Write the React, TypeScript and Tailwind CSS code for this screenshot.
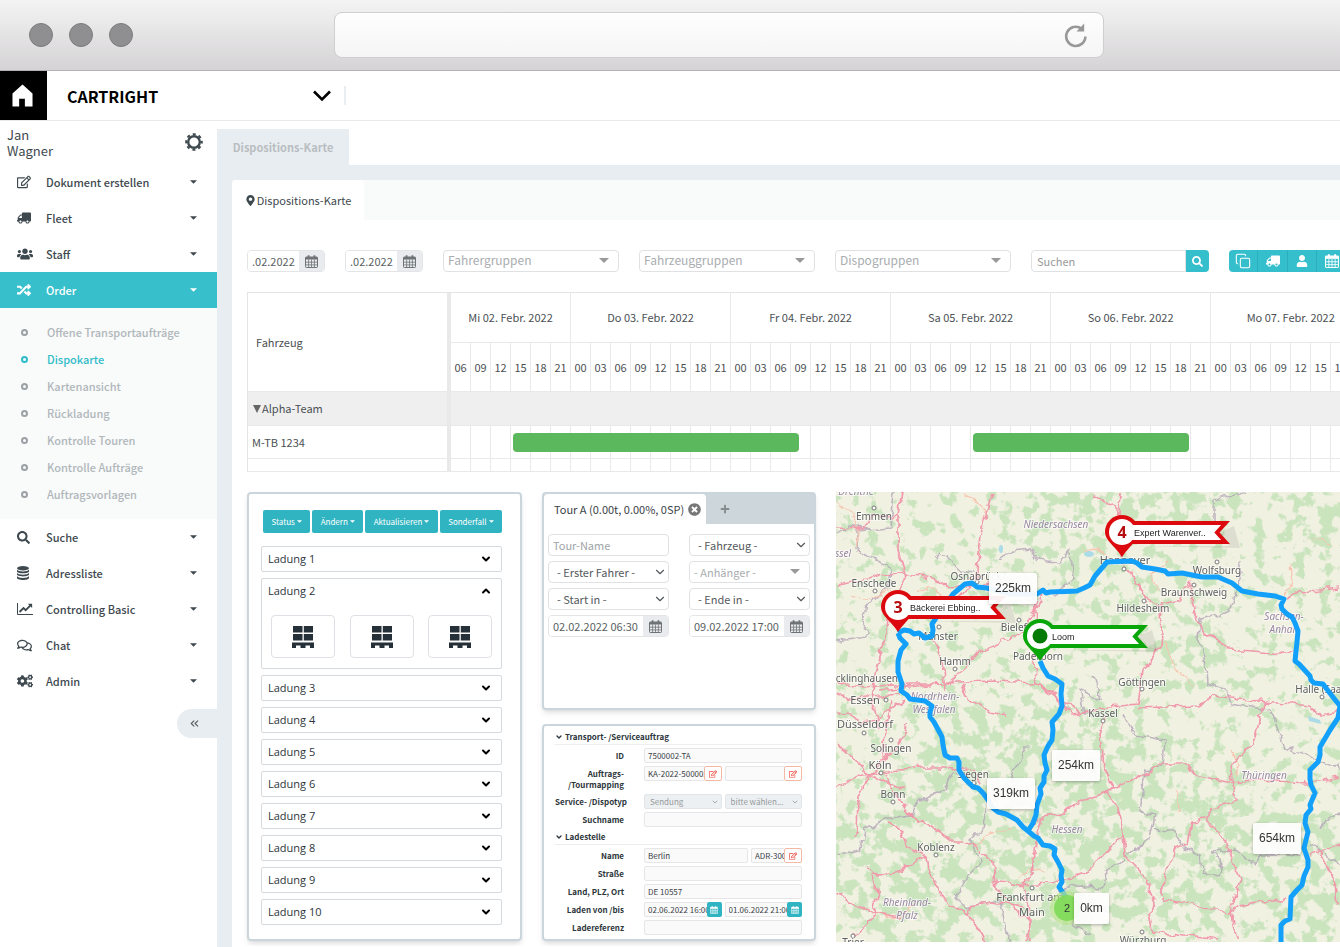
import React, { useState } from 'react';
import {
  FaCogs,
  FaMapMarkerAlt,
  FaPlus,
  FaRandom,
  FaRegComments,
  FaRegEdit,
  FaSearch,
  FaTimesCircle,
  FaTruck,
  FaUser,
  FaUsers,
} from 'react-icons/fa';
import { ChevronDown, ChevronsLeft, ChevronUp, Copy } from 'lucide-react';

const SANS = "font-['Noto_Sans_CJK_SC','Noto_Sans',sans-serif]";

const Caret: React.FC<{ className?: string }> = ({ className }) => (
  <svg viewBox="0 0 8 4" className={className} fill="currentColor" aria-hidden="true">
    <path d="M0 0h8L4 4z" />
  </svg>
);

const CalendarIcon: React.FC<{ className?: string }> = ({ className }) => (
  <svg viewBox="0 0 13 13" className={className} fill="none" stroke="currentColor" aria-hidden="true">
    <rect x="0.5" y="2" width="12" height="10.5" rx="0.8" />
    <path d="M1 2.6h11v1.4H1z" fill="currentColor" />
    <path d="M3.6 4.5v8M6.5 4.5v8M9.4 4.5v8M0.5 7.2h12M0.5 9.9h12" strokeWidth="0.8" />
    <path d="M3.6 0.3v3M9.4 0.3v3" strokeWidth="1.8" />
  </svg>
);

const DatabaseIcon: React.FC<{ className?: string }> = ({ className }) => (
  <svg viewBox="0 0 12 14" className={className} fill="currentColor" aria-hidden="true">
    <ellipse cx="6" cy="2.2" rx="6" ry="2.2" />
    <path d="M0 3.6c1 1.5 3.2 1.9 6 1.9s5-.4 6-1.9v1.8c0 1-2.7 1.9-6 1.9s-6-.9-6-1.9z" />
    <path d="M0 6.8c1 1.5 3.2 1.9 6 1.9s5-.4 6-1.9v1.8c0 1-2.7 1.9-6 1.9s-6-.9-6-1.9z" />
    <path d="M0 10c1 1.5 3.2 1.9 6 1.9s5-.4 6-1.9v1.9c0 1.1-2.7 2-6 2s-6-.9-6-2z" />
  </svg>
);

const LineChartIcon: React.FC<{ className?: string }> = ({ className }) => (
  <svg viewBox="0 0 16 12" className={className} fill="none" stroke="currentColor" aria-hidden="true">
    <path d="M0.5 0v11.5h15.5" />
    <path d="M2.5 9l4-4 2.2 2.2L13.5 2.4" strokeWidth="1.9" />
    <path d="M10.8 0.7h4.3V5z" fill="currentColor" stroke="none" />
  </svg>
);

const GearRing: React.FC = () => (
  <svg viewBox="0 0 18 18" className="size-[18px]" fill="none" stroke="currentColor" aria-hidden="true">
    <circle cx="9" cy="9" r="5.8" strokeWidth="2.4" />
    <circle cx="9" cy="9" r="7.8" strokeWidth="2" strokeDasharray="3.06 3.066" strokeDashoffset="1.5" />
  </svg>
);

const PalletIcon: React.FC = () => (
  <svg viewBox="0 0 22 22" className="size-[22px]" fill="#263038" aria-hidden="true">
    <path d="M1 0h9.5v6.5H1zM11.8 0h9.2v6.5h-9.2zM1 8h9.5v6.5H1zM11.8 8h9.2v6.5h-9.2z" />
    <path d="M0 16.5h22V22h-4v-2.5h-4.5V22h-5v-2.5H4V22H0z" />
  </svg>
);

type MenuItem = { label: string; icon: React.ReactNode; children?: string[] };

const menu: MenuItem[] = [
  { label: 'Dokument erstellen', icon: <FaRegEdit className="size-[14px]" /> },
  { label: 'Fleet', icon: <FaTruck className="size-[14px] -scale-x-100" /> },
  { label: 'Staff', icon: <FaUsers className="size-4" /> },
  {
    label: 'Order',
    icon: <FaRandom className="size-[14px]" />,
    children: [
      'Offene Transportaufträge',
      'Dispokarte',
      'Kartenansicht',
      'Rückladung',
      'Kontrolle Touren',
      'Kontrolle Aufträge',
      'Auftragsvorlagen',
    ],
  },
  { label: 'Suche', icon: <FaSearch className="size-[13px]" /> },
  { label: 'Adressliste', icon: <DatabaseIcon className="h-[14px] w-3" /> },
  { label: 'Controlling Basic', icon: <LineChartIcon className="h-3 w-4" /> },
  { label: 'Chat', icon: <FaRegComments className="size-[15px]" /> },
  { label: 'Admin', icon: <FaCogs className="size-4" /> },
];

const BrowserBar: React.FC = () => (
  <div className="flex h-[71px] items-center border-b border-[#b5b4b5] bg-linear-to-b from-[#f4f4f4] to-[#d5d3d5] pr-[236px] pl-[29px]">
    <div className="mr-[201px] flex shrink-0 gap-4">
      {[0, 1, 2].map((dot) => (
        <span key={dot} className="size-6 rounded-full border border-[#7c7c7e] bg-[#8f8f91]" />
      ))}
    </div>
    <div className="flex h-[46px] flex-1 items-center rounded-lg border border-[#cfcfcf] bg-linear-to-b from-[#fefefe] to-[#f5f5f5] pr-[15px]">
      <input aria-label="Adresse" className="h-full min-w-0 flex-1 bg-transparent px-4 outline-none" />
      <button aria-label="Neu laden" className="text-[#98989a]">
        <svg viewBox="0 0 24 26" className="h-[26px] w-6" fill="none" stroke="currentColor" strokeWidth="2.6" aria-hidden="true">
          <path d="M17.5 6.6A9.6 9.6 0 1 0 21.4 14.5" />
          <path d="M12.5 9.6h7.7V1.4z" fill="currentColor" stroke="none" />
        </svg>
      </button>
    </div>
  </div>
);

const Header: React.FC = () => (
  <header className="flex h-[50px] items-stretch border-b border-[#e6eaec] bg-white">
    <a href="#home" aria-label="Startseite" className="flex w-[47px] items-center bg-black pl-3 text-white">
      <svg viewBox="0 0 22 24" className="h-[23px] w-[21px]" fill="currentColor" aria-hidden="true">
        <path d="M11 0.5L0.5 10v13.5H7.5v-8h6v8h8V10z" />
      </svg>
    </a>
    <button className="my-[15px] flex w-[299px] items-center justify-between border-r-2 border-[#e9eef2] pr-[13px] pl-5 text-base leading-5 font-bold text-black">
      CARTRIGHT
      <svg viewBox="0 0 18 12" className="h-3 w-[18px]" fill="none" stroke="currentColor" strokeWidth="2.6" aria-hidden="true">
        <path d="M1 1.5l8 8 8-8" />
      </svg>
    </button>
  </header>
);

const Sidebar: React.FC = () => (
  <aside className="flex w-[217px] shrink-0 flex-col bg-white text-[#3e494f]">
    <div className="flex h-[43px] items-start justify-between pr-[14px] pl-[7px]">
      <div className="w-20 pt-1.5 text-[13px] leading-4">
        Jan
        <br />
        Wagner
      </div>
      <button aria-label="Einstellungen" className="mt-3">
        <GearRing />
      </button>
    </div>
    <nav>
      {menu.map((item) => (
        <div key={item.label}>
          <button
            className={
              item.children
                ? 'flex h-9 w-full items-center bg-[#37bfcc] pr-5 pl-[17px] text-[11px] font-medium text-white'
                : 'flex h-9 w-full items-center pr-5 pl-[17px] text-[11px] font-medium'
            }
          >
            <span className="flex w-[29px] items-center">{item.icon}</span>
            <span className="flex-1 text-left">{item.label}</span>
            <Caret className="h-1 w-[7px]" />
          </button>
          {item.children && (
            <ul className="bg-[#f9fafa] py-[11px] text-[11px] leading-[27px] font-medium text-[#b0b7ba]">
              {item.children.map((child) => (
                <li key={child}>
                  <a
                    href="#order"
                    className={child === 'Dispokarte' ? 'flex items-center pl-[21px] text-[#2fbccb]' : 'flex items-center pl-[21px]'}
                  >
                    <span
                      className={
                        child === 'Dispokarte'
                          ? 'mr-[19px] size-[7px] rounded-full border-2 border-[#2fbccb]'
                          : 'mr-[19px] size-[7px] rounded-full border-2 border-[#9ba1a4]'
                      }
                    />
                    {child}
                  </a>
                </li>
              ))}
            </ul>
          )}
        </div>
      ))}
    </nav>
    <button
      aria-label="Menü einklappen"
      className="mt-[10px] flex h-[29px] w-10 items-center self-end rounded-l-full bg-[#e8edf1] pl-[11px] text-[#555c60]"
    >
      <ChevronsLeft className="size-[13px]" />
    </button>
  </aside>
);

const DateField: React.FC<{ label: string; value: string; className: string }> = ({ label, value, className }) => (
  <div className={`flex h-[22px] overflow-hidden rounded border border-[#e2e4e6] text-[#5a5f63] ${className}`}>
    <input aria-label={label} defaultValue={value} className="min-w-0 flex-1 bg-white px-1 text-[11px] leading-5 outline-none" />
    <button aria-label={`${label} wählen`} className="flex w-[25px] items-center justify-center bg-[#e9ebee] text-[#6f7376]">
      <CalendarIcon className="size-[13px]" />
    </button>
  </div>
);

const GroupSelect: React.FC<{ label: string }> = ({ label }) => (
  <div className="relative w-[176px] shrink-0">
    <select
      aria-label={label}
      className="block h-[22px] w-full appearance-none rounded border border-[#dfe1e2] bg-white px-1 pb-0.5 text-xs leading-[18px] text-[#a9adb0] outline-none"
    >
      <option>{label}</option>
    </select>
    <Caret className="pointer-events-none absolute top-2 right-[10px] h-[5px] w-[10px] text-[#999]" />
  </div>
);

const FilterBar: React.FC = () => (
  <div className="flex gap-5">
    <DateField label="Von" value=".02.2022" className="w-[78px] shrink-0" />
    <DateField label="Bis" value=".02.2022" className="w-[78px] shrink-0" />
    <GroupSelect label="Fahrergruppen" />
    <GroupSelect label="Fahrzeuggruppen" />
    <GroupSelect label="Dispogruppen" />
    <div className="flex h-[22px] w-[178px] shrink-0">
      <input
        aria-label="Suchen"
        placeholder="Suchen"
        className="min-w-0 flex-1 rounded-l border border-[#dfe1e2] px-[5px] text-[11px] leading-5 outline-none placeholder:text-[#999]"
      />
      <button aria-label="Suche starten" className="flex w-[23px] items-center justify-center rounded-r bg-[#35bfcc] text-white">
        <FaSearch className="size-[11px]" />
      </button>
    </div>
    <div className="flex h-[22px] shrink-0 divide-x divide-[#2cafbc] overflow-hidden rounded bg-[#35bfcc] text-white">
      <button aria-label="Kopieren" className="flex w-[29px] items-center justify-center">
        <Copy className="size-4" strokeWidth={1.6} />
      </button>
      <button aria-label="Fahrzeuge" className="flex w-[30px] items-center justify-center">
        <FaTruck className="size-[14px] -scale-x-100" />
      </button>
      <button aria-label="Fahrer" className="flex w-[29px] items-center justify-center">
        <FaUser className="size-3" />
      </button>
      <button aria-label="Kalender" className="flex w-[29px] items-center justify-center">
        <CalendarIcon className="size-[14px]" />
      </button>
    </div>
  </div>
);

const days = ['Mi 02. Febr. 2022', 'Do 03. Febr. 2022', 'Fr 04. Febr. 2022', 'Sa 05. Febr. 2022', 'So 06. Febr. 2022', 'Mo 07. Febr. 2022'];
const allHours = ['00', '03', '06', '09', '12', '15', '18', '21'];
const slots = days.flatMap((day, i) => (i === 0 ? allHours.slice(2) : allHours).map((hour) => ({ key: day + hour, hour })));

// offsets and lengths in three-hour slots
const tours = [
  { start: 3.1, length: 14.3 },
  { start: 26.1, length: 10.8 },
];

const Timeline: React.FC = () => (
  <div className="overflow-hidden">
    <table className="w-[1123px] table-fixed border-separate border-spacing-0 border-t border-l border-[#e4e4e4] text-[11px] text-[#4b5054]">
      <colgroup>
        <col className="w-[203px]" />
        {slots.map((slot) => (
          <col key={slot.key} className="w-5" />
        ))}
      </colgroup>
      <thead>
        <tr className="h-[50px]">
          <th rowSpan={2} className="border-r-4 border-b border-[#e9e9e9] px-2 text-left font-normal">
            Fahrzeug
          </th>
          {days.map((day, i) => (
            <th
              key={day}
              colSpan={i === 0 ? 6 : 8}
              className="border-r border-b border-[#e9e9e9] p-0 text-center font-normal whitespace-nowrap"
            >
              {day}
            </th>
          ))}
        </tr>
        <tr className="h-[49px]">
          {slots.map((slot) => (
            <th key={slot.key} className="border-r border-b border-[#e9e9e9] p-0 text-center font-normal">
              {slot.hour}
            </th>
          ))}
        </tr>
      </thead>
      <tbody>
        <tr className="h-[34px] bg-[#efefef]">
          <td className="border-r-4 border-b border-[#e9e9e9] px-[5px]">
            <span className="flex items-center gap-px">
              <svg viewBox="0 0 8 8" className="size-2" fill="#666" aria-hidden="true">
                <path d="M0 0h8L4 8z" />
              </svg>
              Alpha-Team
            </span>
          </td>
          <td colSpan={slots.length} className="border-b border-[#e9e9e9]" />
        </tr>
        <tr className="h-[33px]">
          <td className="border-r-4 border-b border-[#e9e9e9] px-1">M-TB 1234</td>
          {slots.map((slot, i) => (
            <td key={slot.key} className={i === 0 ? 'relative border-r border-b border-[#e9e9e9] p-0' : 'border-r border-b border-[#e9e9e9] p-0'}>
              {i === 0 &&
                tours.map((tour) => (
                  <div
                    key={tour.start}
                    className="absolute top-[7px] h-[19px] rounded bg-[#5cb85c]"
                    style={{ left: tour.start * 20, width: tour.length * 20 }}
                  />
                ))}
            </td>
          ))}
        </tr>
        <tr className="h-[13px]">
          <td className="border-r-4 border-b border-[#e9e9e9] p-0" />
          {slots.map((slot) => (
            <td key={slot.key} className="border-r border-b border-[#e9e9e9] p-0" />
          ))}
        </tr>
      </tbody>
    </table>
  </div>
);

const Loads: React.FC = () => {
  const [open, setOpen] = useState(2);

  return (
    <section className="w-[275px] shrink-0 rounded border-2 border-[#cbd6dc] bg-white pt-4 pr-[18px] pb-[14px] pl-3 shadow-md">
      <div className="mb-[13px] flex gap-0.5 pl-0.5">
        {['Status', 'Ändern', 'Aktualisieren', 'Sonderfall'].map((name) => (
          <button
            key={name}
            className="flex h-[23px] flex-auto items-center justify-center gap-0.5 rounded-xs bg-[#30b4c1] text-[8px] text-white"
          >
            {name}
            <Caret className="h-[3px] w-[5px]" />
          </button>
        ))}
      </div>
      <div className="flex flex-col gap-1.5 font-['Open_Sans',sans-serif] text-[11px] text-[#2c363c]">
        {Array.from({ length: 10 }, (_, i) => i + 1).map((n) => (
          <div key={n} className="rounded-xs border border-[#d5dadf]">
            <button
              aria-expanded={open === n}
              onClick={() => setOpen(open === n ? 0 : n)}
              className="flex h-6 w-full items-center justify-between pr-[9px] pl-1.5"
            >
              Ladung {n}
              {open === n ? (
                <ChevronUp className="size-3 text-black" strokeWidth={4} />
              ) : (
                <ChevronDown className="size-3 text-black" strokeWidth={4} />
              )}
            </button>
            {open === n && (
              <div className="flex justify-between px-[9px] pt-3 pb-[10px]">
                {[0, 1, 2].map((pallet) => (
                  <button
                    key={pallet}
                    aria-label={`Palette ${pallet + 1}`}
                    className="flex h-[43px] w-16 items-center justify-center rounded border border-[#dde1e5]"
                  >
                    <PalletIcon />
                  </button>
                ))}
              </div>
            )}
          </div>
        ))}
      </div>
    </section>
  );
};

const TourSelect: React.FC<{ label: string; muted?: boolean }> = ({ label, muted }) => (
  <div className="relative">
    <select
      aria-label={label}
      className={
        muted
          ? 'block h-[22px] w-full appearance-none rounded border border-[#dfe1e2] bg-white px-1 text-[11px] leading-5 text-[#a9adb0] outline-none'
          : 'block h-[22px] w-full appearance-none rounded border border-[#dfe1e2] bg-white px-2 text-[11px] leading-5 text-[#55595c] outline-none'
      }
    >
      <option>- {label} -</option>
    </select>
    {muted ? (
      <Caret className="pointer-events-none absolute top-2 right-[10px] h-[5px] w-[10px] text-[#999]" />
    ) : (
      <ChevronDown className="pointer-events-none absolute top-1 right-[2px] size-[14px] text-[#55595c]" />
    )}
  </div>
);

const TourCard: React.FC = () => (
  <section className="h-[218px] rounded border-2 border-[#cbd6dc] bg-white shadow-md">
    <div className="flex h-[30px] items-stretch bg-[#cdd6db]">
      <button className="flex items-center gap-1 rounded-t bg-white pr-[5px] pl-[10px] text-[11px] whitespace-nowrap text-[#3b4247]">
        Tour A (0.00t, 0.00%, 0SP)
        <FaTimesCircle className="size-[13px] text-[#777]" />
      </button>
      <button aria-label="Tour hinzufügen" className="px-[14px] text-[#868b8e]">
        <FaPlus className="size-[10px]" />
      </button>
    </div>
    <div className="grid grid-cols-2 gap-x-5 gap-y-[5px] px-1 pt-[10px]">
      <input
        aria-label="Tour-Name"
        placeholder="Tour-Name"
        className="h-[22px] min-w-0 rounded border border-[#dfe1e2] px-1 text-[11px] leading-5 outline-none placeholder:text-[#a0a4a7]"
      />
      <TourSelect label="Fahrzeug" />
      <TourSelect label="Erster Fahrer" />
      <TourSelect label="Anhänger" muted />
      <TourSelect label="Start in" />
      <TourSelect label="Ende in" />
      <DateField label="Beginn" value="02.02.2022 06:30" className="min-w-0" />
      <DateField label="Ende" value="09.02.2022 17:00" className="min-w-0" />
    </div>
  </section>
);

const OrderInput: React.FC<{ id: string; value?: string; action?: 'edit' | 'date'; className?: string }> = ({
  id,
  value = '',
  action,
  className = 'flex-1',
}) => (
  <div className={`flex h-[15px] min-w-0 ${className}`}>
    <input
      id={id}
      aria-label={id}
      defaultValue={value}
      className={
        action
          ? 'min-w-0 flex-1 rounded-l-xs border border-r-0 border-[#e6e6e8] bg-[#fafafa] pl-[3px] text-[8px] leading-3 text-[#3b4247] outline-none'
          : 'min-w-0 flex-1 rounded-xs border border-[#e6e6e8] bg-[#fafafa] px-[3px] text-[8px] leading-3 text-[#3b4247] outline-none'
      }
    />
    {action === 'edit' && (
      <button
        aria-label="Bearbeiten"
        className="flex w-[18px] shrink-0 items-center justify-center rounded-xs border border-[#f3b9a2] bg-white text-[#e9463a]"
      >
        <FaRegEdit className="size-2" />
      </button>
    )}
    {action === 'date' && (
      <button aria-label="Datum wählen" className="flex w-[15px] shrink-0 items-center justify-center rounded-xs bg-[#30b4c1] text-white">
        <CalendarIcon className="size-2" />
      </button>
    )}
  </div>
);

const OrderSelect: React.FC<{ id: string; label: string }> = ({ id, label }) => (
  <div className="relative min-w-0 flex-1">
    <select
      id={id}
      aria-label={label}
      className="block h-[15px] w-full appearance-none rounded-xs border border-[#e3e6e9] bg-[#edf0f2] px-[5px] text-[8px] leading-3 text-[#95999c] outline-none"
    >
      <option>{label}</option>
    </select>
    <ChevronDown className="pointer-events-none absolute top-1 right-[3px] size-2 text-[#85898c]" />
  </div>
);

const OrderHeading: React.FC<{ title: string }> = ({ title }) => (
  <h3 className="col-span-2 flex h-[15px] items-center gap-0.5 border-b border-[#eceef0] font-bold">
    <ChevronDown className="size-2" strokeWidth={4} />
    {title}
  </h3>
);

const OrderLabel: React.FC<{ htmlFor: string; children: React.ReactNode }> = ({ htmlFor, children }) => (
  <label htmlFor={htmlFor} className="pt-0.5 text-right leading-[11px] font-bold whitespace-nowrap">
    {children}
  </label>
);

const OrderCard: React.FC = () => (
  <section className="h-[217px] overflow-hidden rounded border-2 border-[#cbd6dc] bg-white shadow-md">
    <div className="grid grid-cols-[69px_minmax(0,1fr)] gap-x-5 gap-y-[3px] pt-1 pr-3 pl-[11px] text-[8px] text-[#2d363b]">
      <OrderHeading title="Transport- /Serviceauftrag" />
      <OrderLabel htmlFor="id">ID</OrderLabel>
      <OrderInput id="id" value="7500002-TA" />
      <OrderLabel htmlFor="auftrag">
        Auftrags-
        <br />
        /Tourmapping
      </OrderLabel>
      <div className="flex h-[25px] gap-[3px]">
        <OrderInput id="auftrag" value="KA-2022-500002" action="edit" />
        <OrderInput id="tourmapping" action="edit" />
      </div>
      <OrderLabel htmlFor="typ">Service- /Dispotyp</OrderLabel>
      <div className="flex gap-[3px]">
        <OrderSelect id="typ" label="Sendung" />
        <OrderSelect id="dispotyp" label="bitte wählen..." />
      </div>
      <OrderLabel htmlFor="suchname">Suchname</OrderLabel>
      <OrderInput id="suchname" />
      <OrderHeading title="Ladestelle" />
      <OrderLabel htmlFor="name">Name</OrderLabel>
      <div className="flex gap-[3px]">
        <OrderInput id="name" value="Berlin" />
        <OrderInput id="adresse" value="ADR-300" action="edit" className="w-[51px]" />
      </div>
      <OrderLabel htmlFor="strasse">Straße</OrderLabel>
      <OrderInput id="strasse" />
      <OrderLabel htmlFor="ort">Land, PLZ, Ort</OrderLabel>
      <OrderInput id="ort" value="DE 10557" />
      <OrderLabel htmlFor="laden-von">Laden von /bis</OrderLabel>
      <div className="flex gap-[3px]">
        <OrderInput id="laden-von" value="02.06.2022 16:00" action="date" />
        <OrderInput id="laden-bis" value="01.06.2022 21:00" action="date" />
      </div>
      <OrderLabel htmlFor="referenz">Ladereferenz</OrderLabel>
      <OrderInput id="referenz" />
    </div>
  </section>
);

const forests: [number, number, number, number][] = [
  [1060, 510, 50, 22],
  [1170, 510, 70, 30],
  [1000, 715, 60, 22],
  [985, 760, 60, 40],
  [1060, 800, 60, 70],
  [1100, 760, 40, 60],
  [1190, 650, 34, 30],
  [1130, 610, 40, 25],
  [940, 790, 60, 40],
  [870, 860, 60, 60],
  [930, 900, 60, 50],
  [1000, 870, 40, 40],
  [1110, 870, 50, 50],
  [1190, 790, 70, 35],
  [1240, 840, 60, 40],
  [1310, 880, 50, 70],
  [1090, 560, 40, 30],
  [1320, 520, 40, 30],
  [1180, 900, 50, 30],
  [1060, 930, 40, 20],
];

const roads = [
  '902,492 898,514 898,551 906,577 890,611 885,634 875,674 872,700 880,730',
  '836,584 867,579 883,574 900,573 937,579 947,587 977,586 990,584 1007,594 1043,594',
  '992,494 982,527 977,571 977,584 940,611 932,631 942,661 945,691',
  '1043,594 1033,611 1027,631 980,651 963,671 947,684 910,684 863,687 837,684',
  '1035,600 1034,640 1036,684 1060,700 1080,712',
  '880,690 957,682 997,681 1035,683 1052,692 1070,714 1092,712',
  '836,527 865,528 874,515 892,519 898,514',
  '836,692 850,700 872,697 900,694 910,684',
  '836,716 850,712 860,722 878,720 892,706 905,700',
  '962,684 970,700 990,712 1008,716',
  '907,724 900,742 884,760 868,776 858,795 857,838',
  '892,700 886,730 884,760',
  '836,742 848,752 870,776 905,790',
  '836,787 862,774 887,772 920,767 947,767 973,770 980,782',
  '885,775 898,798 907,812 940,833 953,842 963,842 977,847 993,862 997,888 1010,905 1030,922 1027,942',
  '888,822 902,832 907,848 927,855 930,875 947,902 967,915 970,907 993,902 1023,907',
  '927,855 902,870 878,876 868,868',
  '873,875 878,895 873,918 853,937',
  '836,892 857,905 873,912 900,917',
  '967,915 975,925 985,942',
  '1028,831 1043,817 1063,812 1077,803 1107,792 1113,787 1130,782 1152,770 1158,763 1187,763 1195,775 1227,782 1260,780 1307,783 1340,777',
  '1043,817 1035,842 1032,875 1022,885 1027,905 1030,942',
  '997,883 1022,885 1060,882 1090,870 1123,835',
  '1107,792 1120,812 1123,835 1125,855 1142,872 1155,902 1148,915 1152,932 1220,940',
  '1233,780 1237,802 1213,807 1205,820 1192,822 1187,843 1175,848 1162,885 1162,900 1180,902 1207,907 1228,913 1243,905 1287,899',
  '1205,820 1227,842 1233,862 1240,878 1230,912 1240,942',
  '1260,715 1252,745 1230,765 1232,780',
  '1310,855 1340,845',
  '1320,852 1335,882 1337,905',
  '1105,715 1100,735 1103,768 1113,787',
  '1120,492 1118,530 1122,562 1137,581 1147,601 1157,606 1180,601 1190,581',
  '1163,606 1160,644 1143,671 1137,704 1100,708 1080,714',
  '1190,584 1195,617 1203,631 1230,649 1253,651 1280,654 1293,650',
  '1287,599 1300,592 1340,588',
  '1137,708 1197,706 1213,696 1267,702 1310,707 1320,715 1340,712',
  '1267,702 1258,716',
  '1094,494 1112,506 1120,516',
];

const minorRoads = [
  '836,500 850,512 860,530 856,548',
  '962,494 975,500 985,512',
  '890,590 870,600 850,596',
  '1110,562 1098,548 1085,552',
  '1160,590 1150,575 1170,560',
  '1290,565 1292,582 1284,599',
  '1165,640 1175,668 1195,685',
  '1012,828 985,835 975,848',
  '1018,878 1030,868 1045,872',
  '1176,790 1180,812',
  '1230,750 1240,765 1235,775',
  '1308,540 1320,538 1330,545',
  '945,600 930,585 918,592',
  '870,912 895,918 915,905',
];

const borders = [
  '893,492 890,527 858,530 857,552 875,559 890,567 888,587 867,607 862,622 870,634 855,640 836,642',
  '836,535 850,525 870,528',
  '935,560 940,553 960,570 975,572',
  '1000,560 1012,550 1030,548 1036,560 1060,562 1070,550 1072,580 1055,595',
  '1215,540 1215,500 1245,492',
  '1240,560 1240,580 1230,612 1200,618 1198,640 1205,655 1207,682 1225,690 1230,704 1270,710 1275,720 1285,748 1320,760 1340,768',
  '836,855 860,850 865,830 890,818 912,815 920,800 945,790 952,772 970,775',
  '985,808 983,830 970,840 982,862 965,880 955,898 965,908 1000,900 1005,925 1010,942',
  '1095,675 1100,700 1080,690 1085,715',
  '1125,715 1135,735 1165,740 1163,765 1145,770 1140,812 1155,815 1150,840 1130,850 1125,862 1105,870 1103,890 1080,885',
  '1155,828 1175,833 1185,850 1200,855 1202,873 1218,875 1222,865 1212,852 1235,850 1255,865 1262,855 1300,855',
  '1320,830 1325,820 1340,815',
  '1310,845 1320,850 1340,865',
  '1080,885 1060,890 1075,925 1090,935',
  '1028,745 1020,760 1012,775 1010,800',
];

// x and y are the middle of the baseline
const places: { name: string; x: number; y: number; size?: number; region?: boolean }[] = [
  { name: 'Drenthe', x: 856, y: 495, region: true },
  { name: 'Emmen', x: 874, y: 520 },
  { name: 'Niedersachsen', x: 1056, y: 528, region: true },
  { name: 'Overijssel', x: 830, y: 557, region: true },
  { name: 'Enschede', x: 874, y: 587 },
  { name: 'Osnabrück', x: 976, y: 580 },
  { name: 'Münster', x: 938, y: 640 },
  { name: 'Bielefeld', x: 1021, y: 631 },
  { name: 'Hamm', x: 955, y: 665 },
  { name: 'Recklinghausen', x: 861, y: 682 },
  { name: 'Paderborn', x: 1038, y: 660 },
  { name: 'Essen', x: 865, y: 704, size: 11 },
  { name: 'Nordrhein-', x: 935, y: 700, region: true },
  { name: 'Westfalen', x: 934, y: 713, region: true },
  { name: 'Düsseldorf', x: 865, y: 728, size: 11 },
  { name: 'Solingen', x: 891, y: 752 },
  { name: 'Köln', x: 880, y: 769, size: 11 },
  { name: 'Bonn', x: 893, y: 798 },
  { name: 'Siegen', x: 973, y: 778 },
  { name: 'Koblenz', x: 936, y: 851 },
  { name: 'Rheinland-', x: 907, y: 906, region: true },
  { name: 'Pfalz', x: 907, y: 919, region: true },
  { name: 'Frankfurt am', x: 1030, y: 901, size: 11 },
  { name: 'Main', x: 1032, y: 916, size: 11 },
  { name: 'Hessen', x: 1067, y: 833, region: true },
  { name: 'Hannover', x: 1125, y: 564, size: 11 },
  { name: 'Wolfsburg', x: 1217, y: 574 },
  { name: 'Braunschweig', x: 1194, y: 596 },
  { name: 'Hildesheim', x: 1143, y: 612 },
  { name: 'Göttingen', x: 1142, y: 686 },
  { name: 'Kassel', x: 1103, y: 717 },
  { name: 'Sachsen-', x: 1284, y: 620, region: true },
  { name: 'Anhalt', x: 1284, y: 633, region: true },
  { name: 'Halle (Saale)', x: 1324, y: 693 },
  { name: 'Thüringen', x: 1264, y: 779, region: true },
  { name: 'Würzburg', x: 1143, y: 944 },
  { name: 'Trier', x: 853, y: 946 },
];

const towns = [
  [874, 508], [875, 591], [977, 582], [939, 627], [1019, 620], [955, 669], [886, 700], [864, 733], [891, 740],
  [881, 773], [893, 802], [974, 783], [936, 855], [1032, 888], [1124, 569], [1217, 562], [1194, 585], [1144, 601],
  [1142, 689], [1103, 721], [1322, 697], [1142, 932], [853, 936],
];

const routes = [
  '898,633 904,630 910,631 914,634 919,633 925,638 932,636 933,630 932,624 936,618 940,613 953,594 959,589 965,584 972,583 977,587 987,588 1010,594 1037,594 1043,590 1046,593 1050,592 1077,591 1084,588 1090,585 1095,576 1107,562 1132,561 1137,563 1142,567 1155,569 1165,571 1168,574 1182,573 1202,577 1218,577 1232,583 1242,591 1258,594 1275,596 1284,599 1281,605 1282,609 1287,614 1292,617 1295,623 1298,631 1297,642 1296,651 1295,661 1299,664 1310,676 1311,680 1314,683 1323,684 1329,692 1340,706 1338,718 1330,730 1320,747 1320,755 1318,762 1310,770 1310,779 1311,785 1315,793 1310,805 1311,809 1306,815 1305,823 1308,832 1304,848 1308,860 1308,867 1304,876 1302,885 1297,890 1291,897 1290,919 1285,921 1281,925 1281,942',
  '898,633 900,638 906,644 901,650 898,661 898,672 902,684 901,691 907,695 910,699 925,701 932,706 930,712 930,717 934,722 942,737 943,745 945,755 950,758 957,758 959,762 959,770 964,778 973,787 978,788 983,793 988,800 993,808 998,812 1006,814 1017,820 1023,827 1028,831 1034,836 1038,838 1043,845 1050,846 1055,849 1054,855 1058,862 1062,870 1061,876 1062,882 1059,887 1066,897',
  '1040,661 1043,668 1048,676 1055,679 1062,684 1061,694 1062,706 1059,714 1052,722 1053,730 1052,740 1048,746 1044,755 1045,763 1047,770 1044,776 1044,782 1040,788 1041,794 1037,805 1036,815 1033,823 1028,831',
];

const distances = [
  { text: '225km', x: 989, y: 573, width: 48 },
  { text: '254km', x: 1052, y: 750, width: 48 },
  { text: '319km', x: 987, y: 778, width: 48 },
  { text: '654km', x: 1253, y: 823, width: 48 },
  { text: '0km', x: 1074, y: 893, width: 35 },
];

const Pin: React.FC<{ x: number; y: number; color: string; name: string; stop?: string }> = ({ x, y, color, name, stop }) => (
  <g transform={`translate(${x} ${y})`}>
    <path d="M14 14H108L94 2 112 -6 118 16z" fill="#000" opacity="0.08" />
    <path d="M0 -9H103.5L95 0.5 103.5 10H0z" fill="#fff" stroke={color} strokeWidth="4" strokeMiterlimit="6" />
    <path d="M-17 0a17 17 0 1 1 34 0c0 6-5 10.5-9.5 15.5-3 3.3-5.5 6.500-7.500 9.500-2-3-4.500-6.200-7.500-9.500-4.500-5-9.500-9.500-9.500-15.500z" fill={color} />
    <path d="M5 -7h20v15H5z" fill="#fff" />
    <circle r="13" fill="#fff" />
    {stop ? (
      <text y="6" textAnchor="middle" fontSize="16" fontWeight="700" fill="#b50d10" fontFamily="'Noto Sans', sans-serif">
        {stop}
      </text>
    ) : (
      <circle r="7.5" fill="#067a06" />
    )}
    <text x="12" y="4" fontSize="9" fill="#222" fontFamily="'Liberation Sans', sans-serif">
      {name}
    </text>
  </g>
);

const RouteMap: React.FC = () => (
  <div className="min-w-0 flex-1">
    <svg
      viewBox="836 492 504 450"
      preserveAspectRatio="xMinYMin slice"
      className="block h-[450px] w-full bg-[#f1f1e2]"
      role="img"
      aria-label="Karte"
    >
      <defs>
        <filter id="forest" filterUnits="userSpaceOnUse" x="836" y="492" width="504" height="450" colorInterpolationFilters="sRGB">
          <feTurbulence type="fractalNoise" baseFrequency="0.075" numOctaves="5" seed="23" />
          <feColorMatrix values="0 0 0 0 0  0 0 0 0 0  0 0 0 0 0  1 0 0 0 0" result="noise" />
          <feGaussianBlur in="SourceGraphic" stdDeviation="10" result="density" />
          <feComposite in="noise" in2="density" operator="arithmetic" k2="1" k3="0.2" />
          <feComponentTransfer result="mask">
            <feFuncA type="linear" slope="10" intercept="-5.6" />
          </feComponentTransfer>
          <feFlood floodColor="#cae4be" />
          <feComposite in2="mask" operator="in" />
        </filter>
        <filter id="rough" filterUnits="userSpaceOnUse" x="836" y="492" width="504" height="450" colorInterpolationFilters="sRGB">
          <feTurbulence type="fractalNoise" baseFrequency="0.09" numOctaves="3" seed="4" />
          <feDisplacementMap in="SourceGraphic" scale="9" xChannelSelector="R" yChannelSelector="G" />
        </filter>
        <filter id="soft" x="-10%" y="-10%" width="130%" height="140%">
          <feDropShadow dx="0" dy="1" stdDeviation="1.5" floodOpacity="0.3" />
        </filter>
      </defs>
      <g filter="url(#forest)" fill="#000">
        {forests.map(([x, y, rx, ry]) => (
          <ellipse key={`${x}-${y}`} cx={x} cy={y} rx={rx} ry={ry} fillOpacity="0.5" />
        ))}
      </g>
      <g fill="#aadbe6">
        <ellipse cx="1001" cy="549" rx="2" ry="4" />
        <ellipse cx="1089" cy="554" rx="5" ry="3" />
        <path d="M1308 716l12 4 1 4-12-3z" />
      </g>
      <g filter="url(#rough)" fill="none" strokeLinejoin="round">
        {borders.map((points) => (
          <polyline key={points} points={points} stroke="#b3a5b6" strokeWidth="1.5" opacity="0.8" />
        ))}
        {minorRoads.map((points) => (
          <polyline key={points} points={points} stroke="#f8c3ae" strokeWidth="1.2" />
        ))}
        {roads.map((points) => (
          <polyline key={points} points={points} stroke="#f09aac" strokeWidth="1.7" />
        ))}
      </g>
      {towns.map(([x, y]) => (
        <circle key={`${x}-${y}`} cx={x} cy={y} r="2" fill="#fff" stroke="#777" />
      ))}
      <g textAnchor="middle" fontFamily="'Noto Sans', sans-serif" paintOrder="stroke" stroke="#ffffff" strokeOpacity="0.6" strokeWidth="2">
        {places.map((place) => (
          <text
            key={place.name}
            x={place.x}
            y={place.y}
            fontSize={place.size ?? 10}
            fontStyle={place.region ? 'italic' : 'normal'}
            fill={place.region ? '#9a86a3' : '#5f5f5f'}
          >
            {place.name}
          </text>
        ))}
      </g>
      <g fill="none" stroke="#12a0fb" strokeWidth="5" strokeLinejoin="round">
        {routes.map((points) => (
          <polyline key={points} points={points} />
        ))}
      </g>
      <circle cx="1067" cy="908" r="17" fill="#b5e28c" opacity="0.7" />
      <circle cx="1067" cy="908" r="13" fill="#7ed957" opacity="0.9" />
      <text x="1067" y="912" fontSize="11" textAnchor="middle" fill="#333" fontFamily="'Liberation Sans', sans-serif">
        2
      </text>
      <Pin x={1122} y={532} color="#dc0a0e" stop="4" name="Expert Warenver.." />
      <Pin x={898} y={607} color="#dc0a0e" stop="3" name="Bäckerei Ebbing.." />
      <Pin x={1040} y={636} color="#09a609" name="Loom" />
      <g fontFamily="'Liberation Sans', sans-serif" fontSize="12" fill="#333">
        {distances.map((d) => (
          <g key={d.text} transform={`translate(${d.x} ${d.y})`}>
            <rect width={d.width} height="31" rx="2" fill="#fff" fillOpacity="0.93" filter="url(#soft)" />
            <text x={d.width / 2} y="19" textAnchor="middle">
              {d.text}
            </text>
          </g>
        ))}
      </g>
    </svg>
  </div>
);

export default function App() {
  return (
    <div className={`flex min-h-screen flex-col overflow-hidden bg-white ${SANS}`}>
      <BrowserBar />
      <Header />
      <div className="flex flex-1">
        <Sidebar />
        <main className="flex min-w-0 flex-1 flex-col">
          <div className="pt-2">
            <a href="#karte" className="flex h-9 w-[132px] items-center justify-center bg-[#e8edf2] text-[11px] font-bold text-[#b9bdc0]">
              Dispositions-Karte
            </a>
          </div>
          <div className="flex flex-1 flex-col bg-[#e8edf2] pt-[15px] pl-[15px]">
            <div className="flex flex-1 flex-col rounded-tl bg-white">
              <div className="flex h-10 rounded-tl bg-[#f9fafa]">
                <button className="flex w-[132px] items-center justify-center gap-px rounded-t bg-white text-[11px] text-[#3e494f]">
                  <FaMapMarkerAlt className="size-[11px]" />
                  Dispositions-Karte
                </button>
              </div>
              <div className="overflow-hidden pt-[30px] pb-1 pl-[15px]">
                <FilterBar />
                <div className="mt-5">
                  <Timeline />
                </div>
                <div className="mt-5 flex items-start gap-5">
                  <Loads />
                  <div className="flex w-[274px] shrink-0 flex-col gap-[14px]">
                    <TourCard />
                    <OrderCard />
                  </div>
                  <RouteMap />
                </div>
              </div>
            </div>
          </div>
        </main>
      </div>
    </div>
  );
}
